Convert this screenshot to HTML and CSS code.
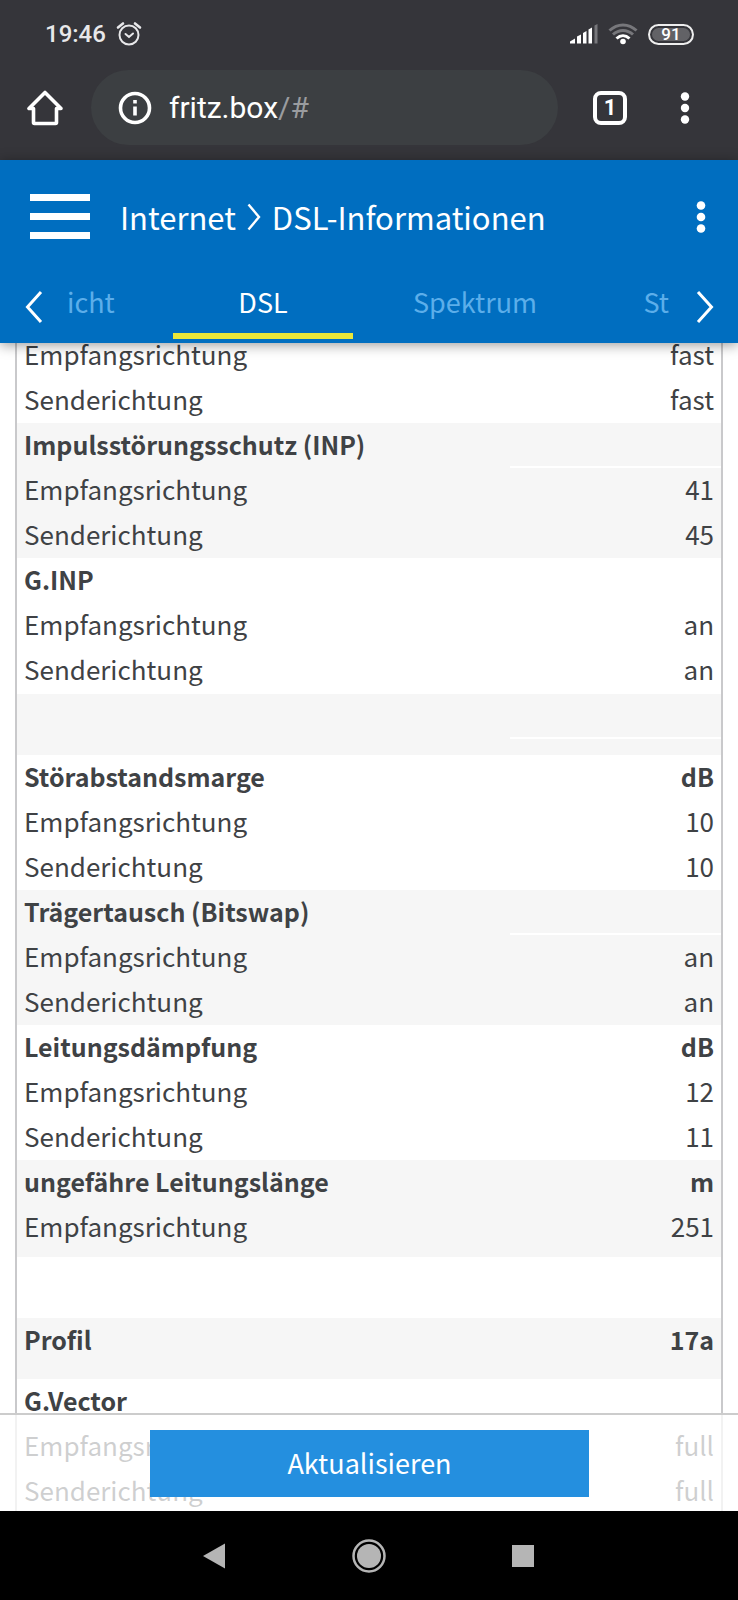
FILE: index.html
```html
<!DOCTYPE html>
<html lang="de">
<head>
<meta charset="utf-8">
<meta name="viewport" content="width=device-width, initial-scale=1">
<title>DSL-Informationen</title>
<link rel="stylesheet" href="styles.css">
</head>
<body>
<div class="browser">
  <div class="status">
    <span class="clock">19:46</span>
    <svg class="alarm" width="26" height="26" viewBox="0 0 26 26" fill="none" stroke="#e8e8ea" stroke-width="2" stroke-linecap="round"><circle cx="13" cy="14" r="9.5"/><path d="M9.5 13l3.500 3 4-3.500"/><path stroke-width="2.600" d="M2 6.500l5-4M24 6.500l-5-4"/></svg>
    <span class="status-icons">
      <svg width="28" height="20" viewBox="0 0 28 20" fill="#fff"><path d="M0 19.500v-2l5-3v5zM7 12.500l4-2v9H7zM13 9l3.500-2v12.500H13zM18.500 5.500l3.500-2v16h-3.500z"/><path fill="#77777b" d="M24.500 1.500l3-1.500v19.500h-3z"/></svg>
      <svg width="30" height="22" viewBox="0 0 30 22" fill="none" stroke-width="3"><path stroke="#77777b" d="M1.500 7.500c8-7.500 19-7.500 27 0M5 11.500c6-5.500 14-5.500 20 0"/><path stroke="#fff" d="M8.500 15.500c4-3.700 9-3.700 13 0"/><circle cx="15" cy="18.500" r="2.800" fill="#fff"/></svg>
      <span class="battery">91</span>
    </span>
  </div>
  <div class="toolbar">
    <button class="icon-button" aria-label="Startseite"><svg width="36" height="36" viewBox="0 0 36 36" fill="none" stroke="#fff" stroke-width="3.600" stroke-linejoin="round"><path d="M2 18.500h4.500V32.500q0 1 1 1h21q1 0 1-1V18.500H34L18 2.500z"/></svg></button>
    <button class="address">
      <svg width="34" height="34" viewBox="0 0 34 34"><circle cx="17" cy="17" r="14.500" fill="none" stroke="#fff" stroke-width="3.600"/><path fill="#fff" d="M15.200 15.500h3.600v9h-3.600zM15.200 9h3.600v3.600h-3.600z"/></svg>
      <span>fritz.box<span class="path">/#</span></span>
    </button>
    <button class="tab-count" aria-label="Offene Tabs">1</button>
    <button class="icon-button" aria-label="Browsermenü"><svg width="10" height="34" viewBox="0 0 10 34" fill="#fff"><circle cx="5" cy="5.500" r="4.200"/><circle cx="5" cy="17" r="4.200"/><circle cx="5" cy="28.500" r="4.200"/></svg></button>
  </div>
</div>

<header class="header">
  <div class="title-row">
    <button class="burger" aria-label="Menü"><i></i><i></i><i></i></button>
    <h1 class="title">
      <a href="#">Internet</a>
      <svg width="14" height="28" viewBox="0 0 14 28" fill="none" stroke="#fff" stroke-width="2.400"><path d="M1.500 1.500L12 14 1.500 26.500"/></svg>
      <span>DSL-Informationen</span>
    </h1>
    <button class="icon-button" aria-label="Optionen"><svg width="10" height="34" viewBox="0 0 10 34" fill="#fff"><circle cx="5" cy="5.500" r="4.300"/><circle cx="5" cy="17" r="4.300"/><circle cx="5" cy="28.500" r="4.300"/></svg></button>
  </div>
  <nav class="tabs">
    <button class="icon-button" aria-label="Zurück"><svg width="18" height="34" viewBox="0 0 18 34" fill="none" stroke="#fff" stroke-width="3"><path d="M16 2L2.500 17 16 32"/></svg></button>
    <div class="tab-list">
      <a href="#" class="first" aria-label="Übersicht">icht</a>
      <a href="#" class="active">DSL</a>
      <a href="#">Spektrum</a>
      <a href="#" class="end" aria-label="Statistik">St</a>
    </div>
    <button class="icon-button" aria-label="Weiter"><svg width="18" height="34" viewBox="0 0 18 34" fill="none" stroke="#fff" stroke-width="3"><path d="M2 2l13.500 15L2 32"/></svg></button>
  </nav>
</header>

<main class="content">
  <table class="values">
    <colgroup><col class="col-name"><col></colgroup>
    <tbody>
      <tr><td>Empfangsrichtung</td><td>fast</td></tr>
      <tr><td>Senderichtung</td><td>fast</td></tr>
    </tbody>
    <tbody class="shaded">
      <tr><th>Impulsstörungsschutz (INP)</th><td class="blank"></td></tr>
      <tr><td>Empfangsrichtung</td><td>41</td></tr>
      <tr><td>Senderichtung</td><td>45</td></tr>
    </tbody>
    <tbody>
      <tr><th>G.INP</th><td></td></tr>
      <tr><td>Empfangsrichtung</td><td>an</td></tr>
      <tr class="last"><td>Senderichtung</td><td>an</td></tr>
    </tbody>
    <tbody class="shaded">
      <tr><td></td><td class="blank"></td></tr>
      <tr class="space"><td></td><td></td></tr>
    </tbody>
    <tbody>
      <tr><th>Störabstandsmarge</th><th>dB</th></tr>
      <tr><td>Empfangsrichtung</td><td>10</td></tr>
      <tr><td>Senderichtung</td><td>10</td></tr>
    </tbody>
    <tbody class="shaded">
      <tr><th>Trägertausch (Bitswap)</th><td class="blank"></td></tr>
      <tr><td>Empfangsrichtung</td><td>an</td></tr>
      <tr><td>Senderichtung</td><td>an</td></tr>
    </tbody>
    <tbody>
      <tr><th>Leitungsdämpfung</th><th>dB</th></tr>
      <tr><td>Empfangsrichtung</td><td>12</td></tr>
      <tr><td>Senderichtung</td><td>11</td></tr>
    </tbody>
    <tbody class="shaded">
      <tr><th>ungefähre Leitungslänge</th><th>m</th></tr>
      <tr class="tall"><td>Empfangsrichtung</td><td>251</td></tr>
    </tbody>
    <tbody>
      <tr><td></td><td></td></tr>
      <tr class="space"><td></td><td></td></tr>
    </tbody>
    <tbody class="shaded">
      <tr><th>Profil</th><th>17a</th></tr>
      <tr class="space"><td></td><td></td></tr>
    </tbody>
    <tbody>
      <tr><th>G.Vector</th><td></td></tr>
      <tr><td>Empfangsrichtung</td><td>full</td></tr>
      <tr><td>Senderichtung</td><td>full</td></tr>
    </tbody>
  </table>
  <div class="actions"><button class="refresh">Aktualisieren</button></div>
</main>

<nav class="system-nav">
  <button class="icon-button" aria-label="Zurück"><svg width="24" height="26" viewBox="0 0 24 26"><path fill="#b5b5b5" d="M23 .5v25L1 13z"/></svg></button>
  <button class="icon-button" aria-label="Home"><svg width="36" height="36" viewBox="0 0 36 36"><circle cx="18" cy="18" r="15.500" fill="none" stroke="#b5b5b5" stroke-width="2.500"/><circle cx="18" cy="18" r="12" fill="#b5b5b5"/></svg></button>
  <button class="icon-button" aria-label="Übersicht"><svg width="22" height="22" viewBox="0 0 22 22"><path fill="#b5b5b5" d="M0 0h22v22H0z"/></svg></button>
</nav>
</body>
</html>
```

FILE: styles.css
```css
* {
  box-sizing: border-box;
}

body {
  margin: 0;
  height: 100vh;
  display: flex;
  flex-direction: column;
  background: #fff;
  color: #3f4245;
  font-family: "Noto Sans CJK JP", "Noto Sans", sans-serif;
  font-size: 26px;
}

button {
  border: 0;
  padding: 0;
  background: none;
  color: inherit;
  font: inherit;
}

a {
  color: inherit;
  text-decoration: none;
}

svg {
  display: block;
  flex: none;
}

/* Browser frame */
.browser {
  flex: none;
  background: #35353a;
  color: #fff;
  font-family: Roboto, sans-serif;
}

.status {
  display: flex;
  align-items: center;
  gap: 10px;
  height: 70px;
  padding: 0 44px 2px 45px;
}

.clock {
  color: #e8e8ea;
  font-size: 24px;
  font-weight: 500;
}

.status-icons {
  display: flex;
  align-items: center;
  gap: 10px;
  margin-left: auto;
}

.battery {
  width: 46px;
  height: 21px;
  border: 2px solid #eee;
  border-radius: 11px;
  background: #626266;
  box-shadow: inset 0 0 0 2px #35353a;
  font-size: 17px;
  font-weight: 500;
  line-height: 17px;
  text-align: center;
}

.toolbar {
  display: flex;
  align-items: center;
  height: 90px;
  padding: 0 48px 15px 27px;
}

.address {
  flex: 1;
  display: flex;
  align-items: center;
  gap: 17px;
  height: 75px;
  margin: 0 35px 0 28px;
  padding-left: 27px;
  border-radius: 38px;
  background: #3c3f42;
  font-size: 30px;
}

.path {
  color: #9a9c9f;
}

.tab-count {
  width: 34px;
  height: 34px;
  margin-right: 53px;
  border: 4px solid #fff;
  border-radius: 8px;
  font-size: 22px;
  font-weight: 700;
  line-height: 26px;
}

/* Page header */
.header {
  flex: none;
  z-index: 1;
  background: #006ec0;
  color: #fff;
  box-shadow: 0 2px 12px rgba(0, 0, 0, 0.4);
}

.title-row {
  display: flex;
  align-items: center;
  height: 113px;
  padding: 0 32px 0 30px;
}

.burger {
  display: flex;
  flex-direction: column;
  gap: 12px;
  width: 60px;
}

.burger i {
  height: 7px;
  background: #fff;
}

.title {
  flex: 1;
  display: flex;
  align-items: center;
  gap: 11px;
  margin: 0 0 0 30px;
  font-size: 31px;
  font-weight: 400;
  line-height: 40px;
}

.tabs {
  display: flex;
  align-items: center;
  height: 70px;
  padding: 0 24px 2px 25px;
}

.tab-list {
  flex: 1;
  display: grid;
  grid-template-columns: 106px 180px 244px 1fr;
  height: 68px;
  margin: 0 27px 0 24px;
}

.tab-list a {
  height: 66px;
  color: #5caeea;
  font-size: 27px;
  line-height: 58px;
  text-align: center;
}

.tab-list .first {
  text-align: left;
}

.tab-list .end {
  text-align: right;
}

.tab-list .active {
  border-bottom: 6px solid #e9e73a;
  color: #fff;
}

/* Values */
.content {
  flex: 1;
  min-height: 0;
  position: relative;
  overflow: hidden;
  padding: 0 15px;
}

.values {
  width: 100%;
  margin-top: -10px;
  border: solid #c9c9cb;
  border-width: 0 2px;
  border-spacing: 0;
  table-layout: fixed;
}

.col-name {
  width: 70%;
}

.values td,
.values th {
  height: 45px;
  padding: 0 7px;
  line-height: 42px;
  text-align: left;
  vertical-align: top;
  white-space: nowrap;
}

.values th {
  font-size: 25px;
}

.values tr > :last-child {
  text-align: right;
}

.values .shaded {
  background: #f6f6f6;
}

.values .blank {
  border-bottom: 2px solid #fff;
}

.values .last td {
  height: 46px;
}

.values .tall td {
  height: 52px;
}

.values .space td {
  height: 16px;
  line-height: 16px;
}

.actions {
  position: absolute;
  right: 0;
  bottom: 0;
  left: 0;
  display: flex;
  height: 98px;
  padding: 15px 149px 14px 150px;
  border-top: 2px solid #ccc;
  background: rgba(255, 255, 255, 0.75);
}

.refresh {
  flex: 1;
  padding-bottom: 3px;
  background: #248fdf;
  color: #fff;
  font-size: 27px;
}

/* System navigation */
.system-nav {
  flex: none;
  display: flex;
  align-items: center;
  justify-content: center;
  gap: 125px;
  height: 89px;
  padding-right: 3px;
  background: #000;
}
```
